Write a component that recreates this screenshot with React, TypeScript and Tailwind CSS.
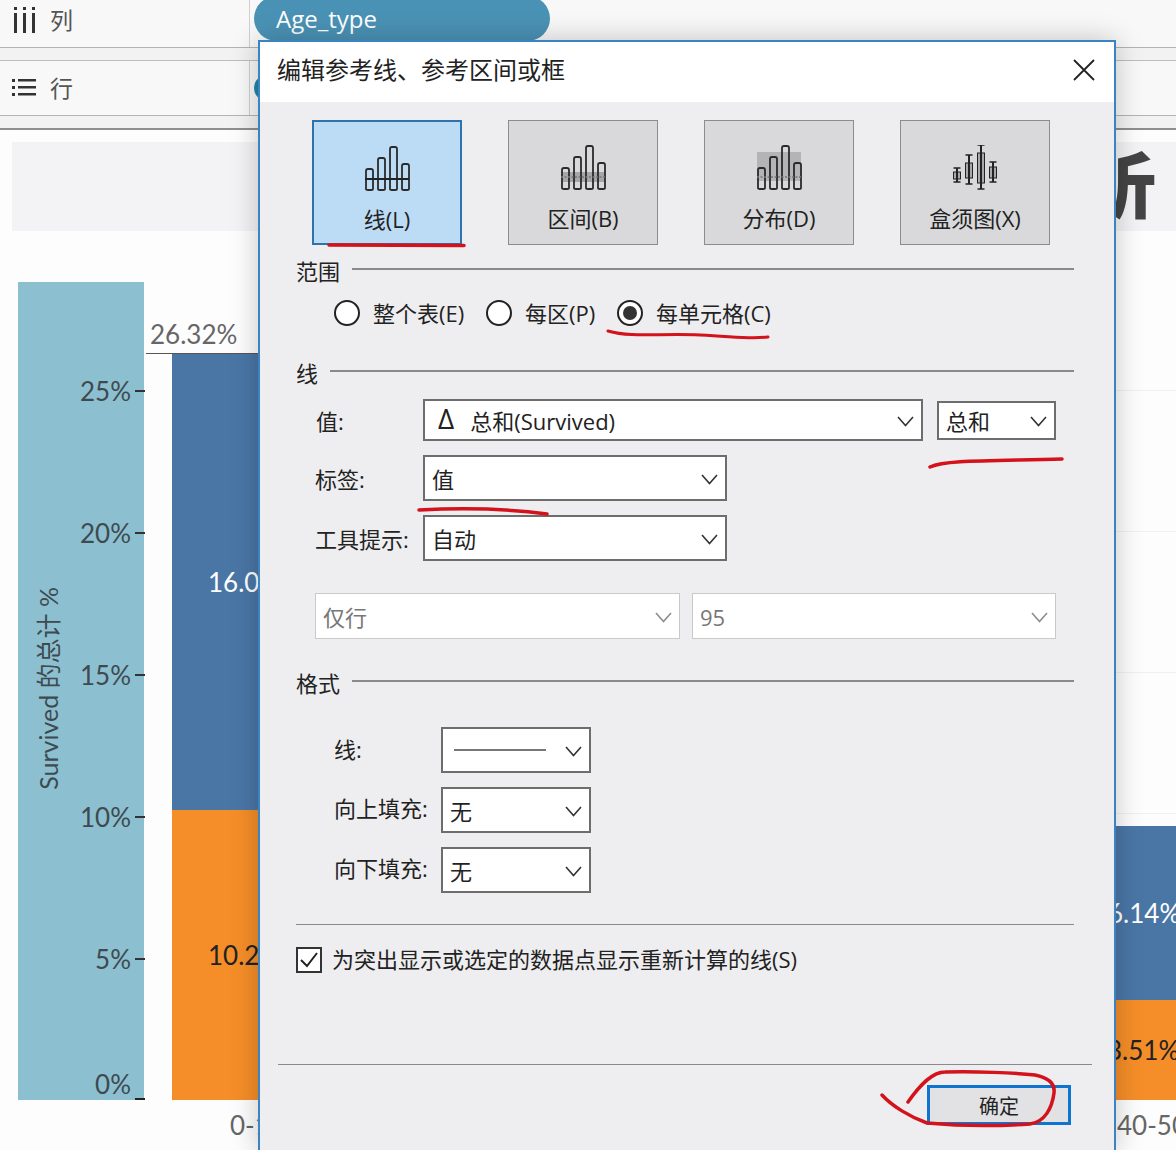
import React from 'react';

const Chevron: React.FC<{ muted?: boolean }> = ({ muted }) => (
  <svg width="17" height="11" viewBox="0 0 17 11" fill="none" className="shrink-0">
    <path d="M1 1l7.500 8.500L16 1" stroke={muted ? '#8d8d8d' : '#333'} strokeWidth="1.6" />
  </svg>
);

const Select: React.FC<{ className: string; muted?: boolean; children?: React.ReactNode }> = ({ className, muted, children }) => (
  <div
    className={`flex items-center justify-between pl-[7px] pr-[7px] pt-[3px] bg-white shrink-0 ${
      muted ? 'border border-[#c9c9c9] text-[#777]' : 'border-2 border-[#6d6d6d] text-[#222]'
    } ${className}`}
  >
    <div className="flex items-center min-w-0 whitespace-nowrap">{children}</div>
    <Chevron muted={muted} />
  </div>
);

const SectionHeader: React.FC<{ title: string; className: string }> = ({ title, className }) => (
  <div className={`flex h-[28px] ${className}`}>
    <span className="leading-[26px] text-[22px] text-[#222]">{title}</span>
    <div className="ml-[12px] mt-[10px] h-[1.5px] flex-1 bg-[#8a8a8a]"></div>
  </div>
);

const Radio: React.FC<{ label: string; checked?: boolean; className: string }> = ({ label, checked, className }) => (
  <div className={`flex items-center gap-[13px] ${className}`}>
    <div className="w-[26px] h-[26px] rounded-full border-2 border-[#222] bg-white flex items-center justify-center shrink-0">
      {checked && <div className="w-[14px] h-[14px] rounded-full bg-[#333]"></div>}
    </div>
    <span className="text-[22px] text-[#222] whitespace-nowrap">{label}</span>
  </div>
);

type MarkKind = 'line' | 'band' | 'dist';

const BarsIcon: React.FC<{ kind: MarkKind }> = ({ kind }) => (
  <svg width="46" height="45" viewBox="0 0 46 45" fill="none">
    {kind === 'dist' && <rect x="1" y="7" width="44" height="29" fill="#b4b4b6" />}
    {kind === 'band' && <rect x="1" y="27" width="44" height="10" fill="#a6a6a8" />}
    {[
      [1, 22],
      [13, 11],
      [25, 0],
      [37, 17],
    ].map(([x, top]) => (
      <path
        key={x}
        d={`M${x + 1} 43V${top + 3}q0-2 2-2h3q2 0 2 2V43q0 1-2 1h-3q-2 0-2-1z`}
        stroke="#2a2a2a"
        strokeWidth="1.8"
      />
    ))}
    {kind === 'line' && <path d="M1 33h44" stroke="#222" strokeWidth="2" />}
    {kind !== 'line' && <path d="M1 32h44" stroke="#777" strokeWidth="1.4" strokeDasharray="2 1.5" />}
  </svg>
);

const BoxIcon: React.FC = () => (
  <svg width="46" height="45" viewBox="0 0 46 45" fill="none" stroke="#222" strokeWidth="1.6">
    {[
      [5, 23, 37, 27, 34],
      [17, 10, 39, 18, 33],
      [29, 0, 44, 8, 38],
      [41, 17, 37, 22, 33],
    ].map(([x, top, bottom, boxTop, boxBottom]) => (
      <g key={x}>
        <path d={`M${x} ${top}V${bottom}M${x - 3.5} ${top}h7M${x - 3.5} ${bottom}h7`} />
        <rect x={x - 3.5} y={boxTop} width="7" height={boxBottom - boxTop} fill="#a9a9ab" strokeWidth="1" />
        <path d={`M${x} ${top}V${bottom}`} strokeWidth="2" />
      </g>
    ))}
  </svg>
);

const MarkButton: React.FC<{ label: string; selected?: boolean; icon: React.ReactNode }> = ({ label, selected, icon }) => (
  <div
    className={`w-[150px] h-[125px] flex flex-col items-center pt-[24px] ${
      selected ? 'border-2 bg-[#bcdcf5] border-[#2d74ae]' : 'bg-[#d9d9db] border-[#8c8c8c] border-[1.5px]'
    }`}
  >
    {icon}
    <span className="mt-[14px] text-[22px] leading-[28px] text-[#222] whitespace-nowrap">{label}</span>
  </div>
);

const RedMarks: React.FC = () => (
  <svg className="absolute left-0 top-0 pointer-events-none" width="1176" height="1150" fill="none" stroke="#d3121b" strokeLinecap="round">
    <path d="M329 245 L464 245.500" strokeWidth="3.500" />
    <path d="M608 331 C632 338 660 333 700 335 S750 339 768 337" strokeWidth="3" />
    <path d="M930 467 C945 460 985 461 1062 459" strokeWidth="3.500" />
    <path d="M419 510 C460 508 510 509 547 514" strokeWidth="3.500" />
    <path d="M908 1102 C920 1085 932 1072 945 1072 C975 1071 1015 1073 1035 1075 C1050 1078 1055 1085 1054 1093 C1052 1108 1045 1122 1030 1124 C1000 1126 960 1126 927 1123 C910 1117 892 1106 882 1095" strokeWidth="3.500" />
  </svg>
);

const App: React.FC = () => {
  const ticks = ['25%', '20%', '15%', '10%', '5%'];

  return (
    <div className="relative w-[1176px] h-[1150px] overflow-hidden bg-[#fdfdfe] font-['Open_Sans','Noto_Sans_CJK_SC',sans-serif]">
      {/* Shelves */}
      <div className="flex h-[48px] bg-[#f8f8f9] border-b border-[#b3b3b3]">
        <div className="w-[250px] flex items-center pl-[14px] pb-[6px] border-r border-[#cfcfcf] shrink-0">
          <svg width="22" height="28" viewBox="0 0 22 28" fill="#333">
            <rect x="0" y="0" width="3" height="3" />
            <rect x="0" y="6" width="3" height="20" />
            <rect x="9" y="0" width="3" height="3" />
            <rect x="9" y="6" width="3" height="20" />
            <rect x="18" y="0" width="3" height="3" />
            <rect x="18" y="6" width="3" height="20" />
          </svg>
          <span className="ml-[14px] text-[23px] text-[#555]">列</span>
        </div>
        <div className="ml-[4px] -mt-[4px] w-[296px] h-[45px] rounded-[24px] bg-[#4a92b5] pl-[22px] flex items-center text-[24px] text-white">
          Age_type
        </div>
      </div>
      <div className="h-[13px] bg-[#f2f2f3] border-b border-[#bdbdbd]"></div>
      <div className="flex h-[55px] bg-[#f8f8f9] border-b border-[#b3b3b3]">
        <div className="w-[250px] flex items-center pl-[12px] border-r border-[#cfcfcf] shrink-0">
          <svg width="24" height="20" viewBox="0 0 24 20" fill="#333">
            <rect x="0" y="1" width="3" height="3" />
            <rect x="6" y="1" width="18" height="2.500" />
            <rect x="0" y="8" width="3" height="3" />
            <rect x="6" y="8" width="18" height="2.500" />
            <rect x="0" y="15" width="3" height="3" />
            <rect x="6" y="15" width="18" height="2.500" />
          </svg>
          <span className="ml-[14px] text-[23px] text-[#555]">行</span>
        </div>
        <div className="ml-[4px] mt-[14px] w-[200px] h-[26px] rounded-[13px] bg-[#1f86a8]"></div>
      </div>
      <div className="h-[14px] bg-[#f2f2f3] border-b-2 border-[#8e8e8e]"></div>

      {/* Title band */}
      <div className="mt-[12px] ml-[12px] h-[89px] bg-[#f3f3f6] flex items-center justify-end pr-[20px] pb-[6px] overflow-hidden">
        <span className="text-[72px] leading-[80px] font-black text-[#444]">析</span>
      </div>

      {/* Chart */}
      <div className="mt-[51px] flex pl-[18px] font-[Lato,'Noto_Sans_CJK_SC',sans-serif] text-[26px]">
        <div className="flex w-[126px] h-[818px] bg-[#8cc0d0] shrink-0 text-[#3f4a50]">
          <div className="w-[62px] pb-[6px] flex items-center justify-center shrink-0">
            <span className="[writing-mode:vertical-rl] [text-orientation:sideways] rotate-180 text-[25px] whitespace-nowrap">Survived 的总计 %</span>
          </div>
          <div className="flex-1 flex flex-col pt-[38px]">
            {ticks.map(t => (
              <div key={t} className="h-[142px] flex items-center justify-end shrink-0">
                <span>{t}</span>
                <div className="ml-[4px] w-[10px] h-[2px] bg-[#333]"></div>
              </div>
            ))}
            <div className="mt-auto h-[32px] flex items-center justify-end relative">
              <span>0%</span>
              <div className="ml-[4px] w-[10px] h-[2px] bg-[#222] self-end"></div>
            </div>
          </div>
        </div>

        <div className="ml-[28px] w-[230px] shrink-0 flex flex-col">
          <div className="h-[72px] flex items-end">
            <div className="-ml-[26px] flex-1 h-[40px] pl-[4px] leading-[40px] border-b border-[#555] text-[#666]">26.32%</div>
          </div>
          <div className="h-[456px] bg-[#4a76a6] flex items-center pl-[36px] text-white">16.04%</div>
          <div className="h-[290px] bg-[#f58e28] flex items-center pl-[36px] text-[#222]">10.26%</div>
          <div className="h-[50px] pl-[58px] flex items-center text-[#666]">0-10</div>
        </div>

        <div className="ml-auto w-[176px] shrink-0 flex flex-col overflow-hidden">
          <div className="h-[544px] pt-[108px]">
            {[0, 1, 2, 3].map(i => (
              <div key={i} className="h-[142px] border-t border-[#f0f0f0] -mt-px first:mt-0"></div>
            ))}
          </div>
          <div className="h-[174px] bg-[#4a76a6] flex items-center pl-[108px] text-white whitespace-nowrap">6.14%</div>
          <div className="h-[100px] bg-[#f58e28] flex items-center pl-[107px] text-[#222] whitespace-nowrap">3.51%</div>
          <div className="h-[50px] pl-[117px] flex items-center text-[#666] whitespace-nowrap">40-50</div>
        </div>
      </div>

      {/* Dialog */}
      <div className="absolute left-[258px] top-[40px] w-[858px] h-[1114px] border-2 border-[#3b84c4] bg-[#eeeef0] shadow-[0_0_26px_rgba(0,0,0,0.22)] text-[22px] text-[#222]">
        <div className="h-[60px] bg-white flex items-center justify-between pl-[17px] pr-[19px] pb-[4px]">
          <span className="text-[24px]">编辑参考线、参考区间或框</span>
          <svg width="22" height="22" viewBox="0 0 22 22" fill="none">
            <path d="M1 1l20 20M21 1 1 21" stroke="#222" strokeWidth="1.8" />
          </svg>
        </div>

        <div className="pl-[36px] pr-[40px] pt-[18px] flex flex-col">
          <div className="ml-[16px] flex gap-[46px]">
            <MarkButton label="线(L)" selected icon={<BarsIcon kind="line" />} />
            <MarkButton label="区间(B)" icon={<BarsIcon kind="band" />} />
            <MarkButton label="分布(D)" icon={<BarsIcon kind="dist" />} />
            <MarkButton label="盒须图(X)" icon={<BoxIcon />} />
          </div>

          <SectionHeader title="范围" className="mt-[13px]" />
          <div className="mt-[12px] ml-[38px] h-[30px] flex items-center">
            <Radio label="整个表(E)" className="w-[152px]" />
            <Radio label="每区(P)" className="w-[131px]" />
            <Radio label="每单元格(C)" checked className="w-[200px]" />
          </div>

          <SectionHeader title="线" className="mt-[32px]" />
          <div className="mt-[11px] ml-[20px] flex items-center h-[42px]">
            <span className="w-[107px] shrink-0 pt-[2px]">值:</span>
            <Select className="w-[500px] h-[42px]">
              <span className="ml-[6px] mr-[16px] -mt-[7px] text-[28px] leading-[28px]">Δ</span>
              <span>总和(Survived)</span>
            </Select>
            <Select className="ml-[14px] w-[119px] h-[39px]">总和</Select>
          </div>
          <div className="mt-[14px] ml-[19px] flex items-center h-[46px]">
            <span className="w-[108px] shrink-0 pt-[2px]">标签:</span>
            <Select className="w-[304px] h-[46px]">值</Select>
          </div>
          <div className="mt-[14px] ml-[19px] flex items-center h-[46px]">
            <span className="w-[108px] shrink-0 pt-[2px] whitespace-nowrap">工具提示:</span>
            <Select className="w-[304px] h-[46px]">自动</Select>
          </div>
          <div className="mt-[32px] ml-[19px] flex gap-[12px]">
            <Select muted className="w-[365px] h-[46px]">仅行</Select>
            <Select muted className="w-[364px] h-[46px]">95</Select>
          </div>

          <SectionHeader title="格式" className="mt-[31px]" />
          <div className="mt-[29px] ml-[38px] flex items-center h-[46px]">
            <span className="w-[107px] shrink-0 pb-[2px]">线:</span>
            <Select className="w-[150px] h-[46px]">
              <div className="ml-[4px] -mt-[3px] w-[92px] h-[2px] bg-[#777]"></div>
            </Select>
          </div>
          <div className="mt-[14px] ml-[38px] flex items-center h-[46px]">
            <span className="w-[107px] shrink-0 pb-[4px] whitespace-nowrap">向上填充:</span>
            <Select className="w-[150px] h-[46px]">无</Select>
          </div>
          <div className="mt-[14px] ml-[38px] flex items-center h-[46px]">
            <span className="w-[107px] shrink-0 pb-[4px] whitespace-nowrap">向下填充:</span>
            <Select className="w-[150px] h-[46px]">无</Select>
          </div>

          <div className="mt-[31px] h-px bg-[#8a8a8a]"></div>
          <div className="mt-[22px] flex items-center h-[26px]">
            <div className="w-[26px] h-[26px] border-2 border-[#333] bg-white flex items-center justify-center shrink-0">
              <svg width="20" height="18" viewBox="0 0 20 18" fill="none">
                <path d="M2 9l6 6L18 2" stroke="#222" strokeWidth="2" />
              </svg>
            </div>
            <span className="ml-[10px] pb-[2px] whitespace-nowrap">为突出显示或选定的数据点显示重新计算的线(S)</span>
          </div>

          <div className="mt-[91px] -ml-[18px] -mr-[18px] h-px bg-[#8a8a8a]"></div>
          <div className="mt-[20px] flex justify-end mr-[3px]">
            <div className="w-[144px] h-[40px] pt-[3px] border-[3.5px] border-[#0f73d0] bg-[#e2e2e4] flex items-center justify-center text-[20px]">
              确定
            </div>
          </div>
        </div>
      </div>

      <RedMarks />
    </div>
  );
};

export default App;
